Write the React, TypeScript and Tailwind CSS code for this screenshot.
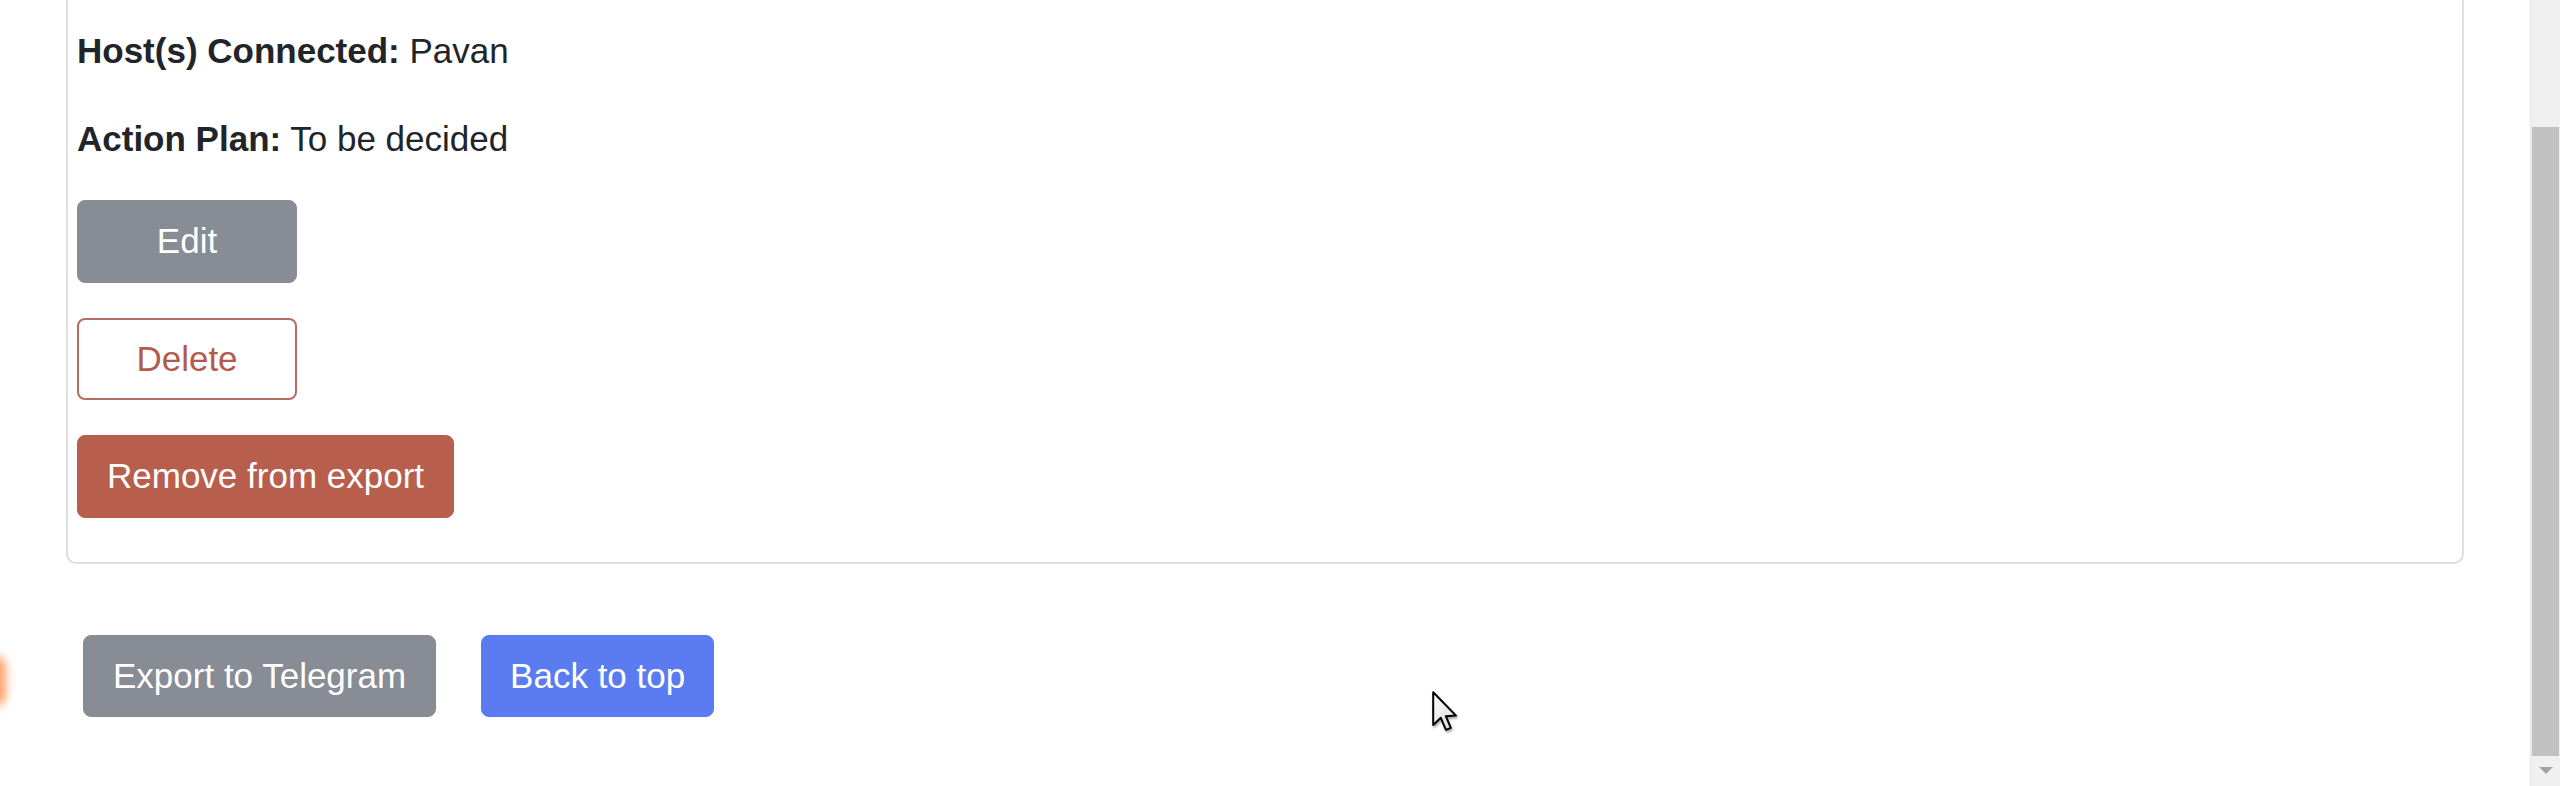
import React from 'react'

function Cursor() {
  return (
    <svg
      className="absolute left-[1432px] top-[691px] drop-shadow-[1px_2px_1px_rgba(0,0,0,0.35)]"
      width="26"
      height="42"
      viewBox="0 0 13 21"
    >
      <defs>
        <linearGradient id="cur" x1="0" y1="0" x2="1" y2="1">
          <stop offset="0" stopColor="#ffffff" />
          <stop offset="1" stopColor="#d8d8d8" />
        </linearGradient>
      </defs>
      <path
        d="M0.6 0.6 L0.6 17 L4.4 13.4 L7 19.4 L9.4 18.4 L6.9 12.6 L12 12.3 Z"
        fill="url(#cur)"
        stroke="#000"
        strokeWidth="1"
        strokeLinejoin="round"
      />
    </svg>
  )
}

function Scrollbar() {
  return (
    <div className="flex w-[30px] shrink-0 flex-col border-l border-[#e6e6e6] bg-[#f0f0f0]">
      <div className="h-[127px]" />
      <div className="mx-[1px] h-[629px] bg-[#c1c1c1]" />
      <div className="flex flex-1 items-center justify-center">
        <svg width="14" height="8" viewBox="0 0 14 8">
          <path d="M0 0 L14 0 L7 7 Z" fill="#a3a3a3" />
        </svg>
      </div>
    </div>
  )
}

export default function App() {
  return (
    <div className="relative flex h-[786px] w-[2560px] overflow-hidden bg-white font-['Liberation_Sans',Arial,sans-serif] text-[35px] leading-[1.5] text-[#212529]">
      <div className="relative flex-1">
        {/* Report card (top scrolled off) */}
        <div className="mx-[66px] rounded-b-[10px] border-2 border-t-0 border-[#dedede] px-[9px] pt-[25px] pb-[44px]">
          <p className="mb-[35px]">
            <b>Host(s) Connected:</b> Pavan
          </p>
          <p className="mb-[35px]">
            <b>Action Plan:</b> To be decided
          </p>

          <div className="flex flex-col items-start gap-[35px]">
            <button className="w-[220px] rounded-[8px] border border-[#888c94] bg-[#888c94] py-[14px] text-white">
              Edit
            </button>
            <button className="w-[220px] rounded-[8px] border-2 border-[#b96b5f] bg-white py-[13px] text-[#b35a4c]">
              Delete
            </button>
            <button className="rounded-[8px] border border-[#b85e4d] bg-[#b85e4d] px-[29px] py-[14px] text-white">
              Remove from export
            </button>
          </div>
        </div>

        {/* Footer actions */}
        <div className="ml-[83px] flex gap-[45px] pt-[71px]">
          <button className="rounded-[8px] border border-[#888c94] bg-[#888c94] px-[29px] py-[14px] text-white">
            Export to Telegram
          </button>
          <button className="rounded-[8px] border border-[#5b7cf1] bg-[#5b7cf1] px-[28px] py-[14px] text-white">
            Back to top
          </button>
        </div>

        {/* partly hidden floating element at the left edge */}
        <div className="absolute left-[-16px] top-[656px] h-[50px] w-[22px] rounded-full bg-[#ff8a45] opacity-80 blur-[5px]" />
        <Cursor />
      </div>
      <Scrollbar />
    </div>
  )
}
